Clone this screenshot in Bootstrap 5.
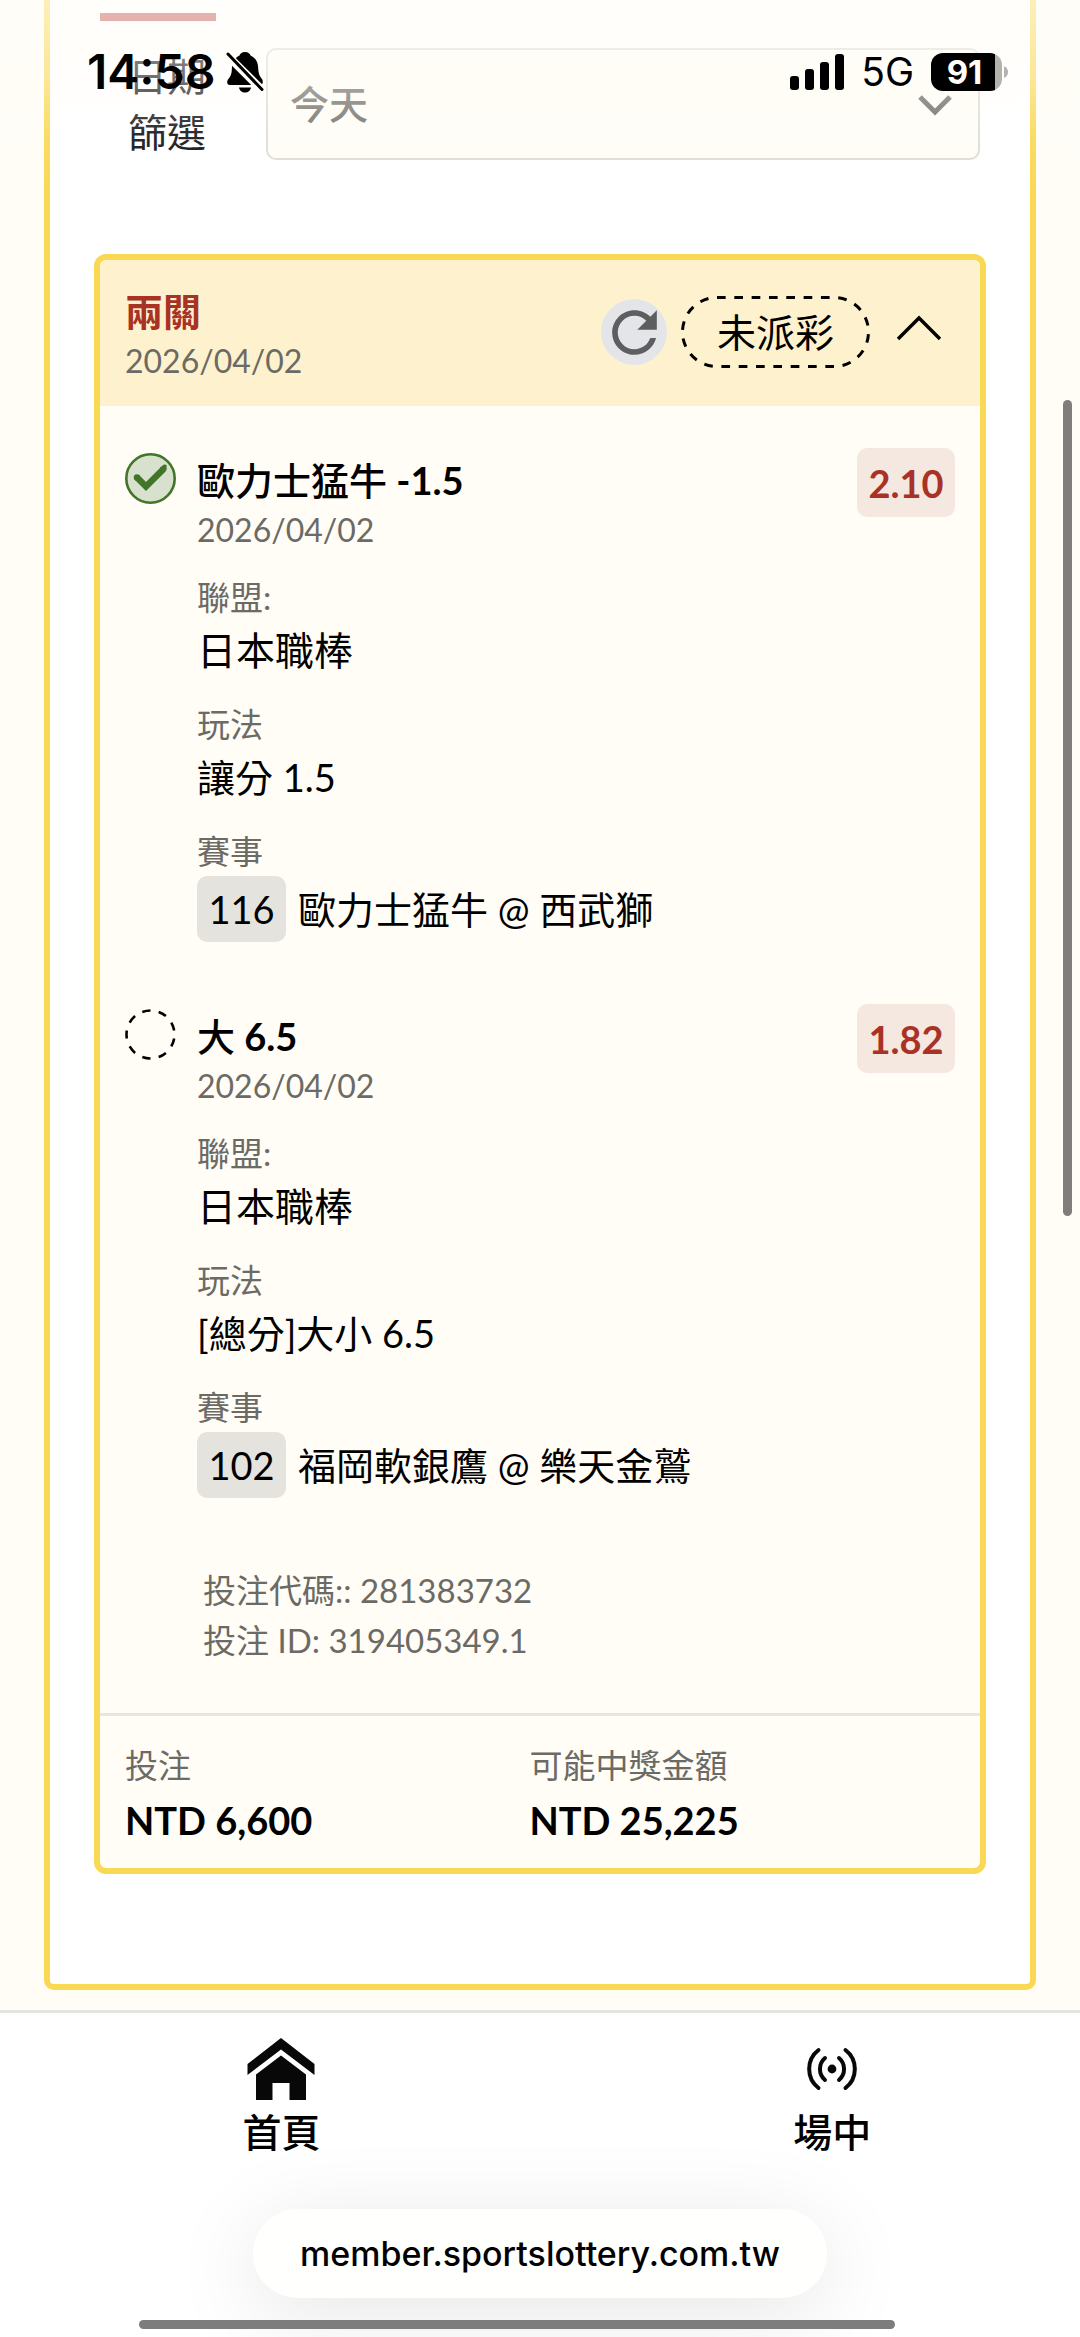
<!DOCTYPE html>
<html lang="zh-Hant">
<head>
<meta charset="utf-8">
<meta name="viewport" content="width=device-width, initial-scale=1">
<title>投注紀錄</title>
<link href="https://cdn.jsdelivr.net/npm/bootstrap@5.3.0/dist/css/bootstrap.min.css" rel="stylesheet">
<style>
  :root { --gold: #f9d853; --cream: #fffdf6; --brick: #a93226; --ash: #6b6a65; }
  body { background: var(--cream); color: #000; font-family: Lato, "Noto Sans CJK TC", sans-serif; font-size: 38px; line-height: 56px; overflow-x: hidden; }
  svg { display: block; flex: none; }
  .han { font-size: 39px; }

  .frame { margin: 0 44px 20px; border: 6px solid var(--gold); border-top: 0; border-radius: 0 0 10px 10px; background: #fff; padding: 13px 44px 110px; }
  .tab-mark { width: 116px; height: 8px; margin-left: 6px; background: #c04f48; }
  .filter-row { margin: 27px 6px 94px; gap: 32px; }
  .filter-label { width: 134px; color: #111; }
  .filter-select { height: 112px; padding: 0 22px; border: 2px solid #dedcd6; border-radius: 10px; background: var(--cream); color: #6f6e6a; font-weight: 500; appearance: none; opacity: 1; }
  .filter-caret { right: 28px; top: 46px; pointer-events: none; }

  .bet-card { border: 6px solid var(--gold); border-radius: 12px; background: var(--cream); overflow: hidden; }
  .bet-head { background: #fdf2cd; padding: 27px 25px 20px; }
  .bet-kind { color: var(--brick); font-weight: 700; line-height: 49px; }
  .muted { color: var(--ash); font-size: 33px; line-height: 50px; }
  .day { color: var(--ash); font-size: 32px; line-height: 50px; }
  .head-tools { padding-top: 9px; }
  .round-btn { width: 66px; height: 66px; border-radius: 50%; background: #e4e5e8; }
  .state-pill { width: 189px; height: 72px; margin-left: 14px; }
  .state-pill svg { inset: 0; }
  .toggle-btn { margin: 0 8px 0 21px; }

  .leg { padding: 42px 25px 20px; gap: 21px; }
  .leg-icon { margin-top: 5px; }
  .leg-body { padding-top: 7px; }
  .leg-title { font-weight: 700; line-height: 50px; }
  .leg-facts { margin: 17px 0 0; }
  .leg-facts dt { font-weight: 400; }
  .leg-facts dd { margin: 0 0 21px; }
  .leg-facts dd:last-child { margin: 0; }
  .game-no { height: 66px; width: 89px; border-radius: 10px; background: #e5e3de; margin-right: 12px; }
  .odds { width: 98px; height: 69px; border-radius: 10px; background: #f5e8e0; color: var(--brick); font-weight: 700; }
  .codes { padding: 47px 25px 48px 103px; }
  .totals { border-top: 3px solid #e8e5df; padding: 24px 25px 18px; gap: 6px; }
  .total-col { width: 48%; }
  .total-value { font-weight: 700; line-height: 60px; }

  .bottom-bar { border-top: 3px solid #e4e4e4; background: #fff; height: 327px; overflow: hidden; }
  .tab-strip { padding: 20px 0 0 6px; }
  .tab-link { width: 51vw; flex: none; color: #000; font-weight: 500; }
  .tab-icon { height: 71px; }
  .url-pill { height: 89px; width: 574px; border: 0; border-radius: 45px; background: #fffffd; box-shadow: 0 16px 90px rgba(0,0,0,.1); font: 500 34px/50px Inter, sans-serif; margin-top: 49px; }
  .home-line { width: 70%; height: 9px; border-radius: 5px; background: #7d7d7d; margin: 22px 0 0 139px; }

  .fade-top { inset: 0 0 auto 0; height: 200px; pointer-events: none; background: linear-gradient(rgba(255,253,248,.62), rgba(255,253,248,.4) 40%, rgba(255,255,255,.1) 68%, rgba(255,255,255,0)); }
  .status-bar { inset: 0 0 auto 0; padding: 46px 72px 0 87px; font-family: Inter, sans-serif; pointer-events: none; }
  .clock { font-size: 48px; font-weight: 600; line-height: 52px; }
  .silent { margin: 0 auto 0 11px; }
  .net { font-size: 39px; font-weight: 400; line-height: 52px; margin: 0 17px; }
  .battery { width: 71px; height: 38px; border-radius: 12px; background: linear-gradient(90deg, #000 0 90%, #b3b2ad 90%); color: #fffdf6; font-size: 33px; font-weight: 700; line-height: 38px; padding-right: 4px; }
  .scroll-thumb { right: 8px; top: 400px; width: 9px; height: 816px; border-radius: 5px; background: #7f7e7a; }
</style>
<script src="https://cdn.jsdelivr.net/npm/bootstrap@5.3.0/dist/js/bootstrap.bundle.min.js"></script>
</head>
<body class="position-relative">

<main class="frame">
  <div class="tab-mark"></div>

  <div class="filter-row d-flex align-items-center">
    <label class="filter-label han text-center" for="dateFilter">日期<br>篩選</label>
    <div class="position-relative flex-grow-1">
      <select id="dateFilter" class="filter-select han w-100 d-block">
        <option selected>今天</option>
      </select>
      <svg class="filter-caret position-absolute" width="34" height="22" viewBox="0 0 34 22" fill="none" stroke="#686763" stroke-width="5"><path d="M2 3 17 18 32 3"/></svg>
    </div>
  </div>

  <article class="bet-card">
    <header class="bet-head d-flex align-items-start">
      <div class="me-auto">
        <div class="bet-kind">兩關</div>
        <div class="day">2026/04/02</div>
      </div>
      <div class="head-tools d-flex align-items-center">
        <button type="button" class="round-btn btn p-0 border-0 d-flex align-items-center justify-content-center" aria-label="重新整理">
          <svg width="67" height="67" viewBox="0 0 24 24" fill="#5d5e60"><path d="M17.65 6.35C16.2 4.9 14.21 4 12 4c-4.42 0-7.99 3.58-7.99 8s3.57 8 7.99 8c3.73 0 6.84-2.55 7.73-6h-2.08c-.82 2.33-3.04 4-5.65 4-3.31 0-6-2.69-6-6s2.69-6 6-6c1.66 0 3.14.69 4.22 1.78L13 11h7V4l-2.35 2.35z"/></svg>
        </button>
        <div class="state-pill position-relative d-flex align-items-center justify-content-center">
          <svg class="position-absolute" width="189" height="72" viewBox="0 0 189 72" fill="none" stroke="#000" stroke-width="3"><rect x="1.5" y="1.5" width="186" height="69" rx="34.5" pathLength="442" stroke-dasharray="8.5 8.5"/></svg>
          <span class="han">未派彩</span>
        </div>
        <button type="button" class="toggle-btn btn p-0 border-0" aria-label="收合">
          <svg width="56" height="40" viewBox="0 0 56 40" fill="none" stroke="#000" stroke-width="3.4"><path d="M7 27 28 6 49 27"/></svg>
        </button>
      </div>
    </header>

    <section class="leg d-flex align-items-start">
      <svg class="leg-icon" width="51" height="51" viewBox="0 0 51 51" fill="none"><circle cx="25.5" cy="25.5" r="24.2" fill="#d8e1cd" stroke="#41752a" stroke-width="2.6"/><path d="M12 24.5 21 33.500 38.500 16" stroke="#41752a" stroke-width="6.500"/><circle cx="12" cy="24.500" r="3.250" fill="#41752a"/><path d="M35 14.500 38.500 11.800Q41 11 41.600 12.500V17L36.500 21.500Z" fill="#41752a"/></svg>
      <div class="leg-body flex-grow-1">
        <div class="leg-title"><span class="fw-medium">歐力士猛牛</span> -1.5</div>
        <div class="day">2026/04/02</div>
        <dl class="leg-facts">
          <dt class="muted">聯盟:</dt><dd class="han">日本職棒</dd>
          <dt class="muted">玩法</dt><dd>讓分 1.5</dd>
          <dt class="muted">賽事</dt>
          <dd class="d-flex align-items-center"><span class="game-no d-flex align-items-center justify-content-center">116</span>歐力士猛牛 @ 西武獅</dd>
        </dl>
      </div>
      <div class="odds d-flex align-items-center justify-content-center">2.10</div>
    </section>

    <section class="leg d-flex align-items-start">
      <svg class="leg-icon" width="51" height="51" viewBox="0 0 51 51" fill="none" stroke="#000" stroke-width="2.6"><circle cx="25.500" cy="25.500" r="24" pathLength="144" stroke-dasharray="8 8" stroke-dashoffset="-4"/></svg>
      <div class="leg-body flex-grow-1">
        <div class="leg-title"><span class="fw-medium">大</span> 6.5</div>
        <div class="day">2026/04/02</div>
        <dl class="leg-facts">
          <dt class="muted">聯盟:</dt><dd class="han">日本職棒</dd>
          <dt class="muted">玩法</dt><dd>[總分]大小 6.5</dd>
          <dt class="muted">賽事</dt>
          <dd class="d-flex align-items-center"><span class="game-no d-flex align-items-center justify-content-center">102</span>福岡軟銀鷹 @ 樂天金鷲</dd>
        </dl>
      </div>
      <div class="odds d-flex align-items-center justify-content-center">1.82</div>
    </section>

    <div class="codes muted">
      <div>投注代碼:: 281383732</div>
      <div>投注 ID: 319405349.1</div>
    </div>

    <footer class="totals d-flex">
      <div class="total-col">
        <div class="muted">投注</div>
        <div class="total-value">NTD 6,600</div>
      </div>
      <div class="total-col">
        <div class="muted">可能中獎金額</div>
        <div class="total-value">NTD 25,225</div>
      </div>
    </footer>
  </article>
</main>

<footer class="bottom-bar">
  <nav class="tab-strip d-flex">
    <a href="#" class="tab-link han text-decoration-none d-flex flex-column align-items-center">
      <span class="tab-icon d-flex align-items-center"><svg width="68" height="62" viewBox="0 0 68 62" fill="#080808"><path d="M34 0 67.500 26V37L34 11.500.500 37V26Z"/><path d="M34 17.500 59 36.500V62H42.500V45H25.500V62H9V36.500Z"/></svg></span>
      <span>首頁</span>
    </a>
    <a href="#" class="tab-link han text-decoration-none d-flex flex-column align-items-center">
      <span class="tab-icon d-flex align-items-center"><svg width="52" height="44" viewBox="0 0 52 44" fill="none" stroke="#080808" stroke-width="4" stroke-linecap="round"><circle cx="26" cy="22" r="4.400" fill="#080808" stroke="none"/><path d="M12.500 3A24 24 0 0 0 12.500 41M39.500 3A24 24 0 0 1 39.500 41M19 11A14.500 14.500 0 0 0 19 33M33 11A14.500 14.500 0 0 1 33 33"/></svg></span>
      <span>場中</span>
    </a>
  </nav>
  <button type="button" class="url-pill d-block mx-auto">member.sportslottery.com.tw</button>
  <div class="home-line"></div>
</footer>

<div class="fade-top position-absolute"></div>
<div class="status-bar position-absolute d-flex align-items-center">
  <span class="clock">14:58</span>
  <svg class="silent" width="38" height="42" viewBox="0 0 38 42"><path d="M19 1C22.500 1 24 3 24.500 4.500 30 7 32 11.500 32.200 17 32.400 22.500 33.500 25 36 28 37.500 30.500 37 34 34 34H4C1 34 .500 31 2 28.500 5 25 5.700 22.500 5.900 17 6 11.500 8.500 7 13.500 4.500 14 3 15.500 1 19 1Z"/><path d="M13 36.500H25C24.500 39.500 22 41.500 19 41.500S13.500 39.500 13 36.500Z"/><path d="M-.500 2.500 36.500 39.500" stroke="#fffefa" stroke-width="8"/><path d="M2 3 36 38.500" stroke="#000" stroke-width="3" stroke-linecap="round"/></svg>
  <svg width="54" height="36" viewBox="0 0 54 36"><rect y="22" width="9" height="14" rx="3"/><rect x="15" y="15" width="9" height="21" rx="3"/><rect x="30" y="8" width="9" height="28" rx="3"/><rect x="45" width="9" height="36" rx="3"/></svg>
  <span class="net">5G</span>
  <span class="battery text-center">91</span>
  <svg width="6" height="12" viewBox="0 0 6 12"><path d="M2 0Q6 2 6 6T2 12Z" fill="#b3b2ad"/></svg>
</div>
<div class="scroll-thumb position-absolute"></div>

</body>
</html>
